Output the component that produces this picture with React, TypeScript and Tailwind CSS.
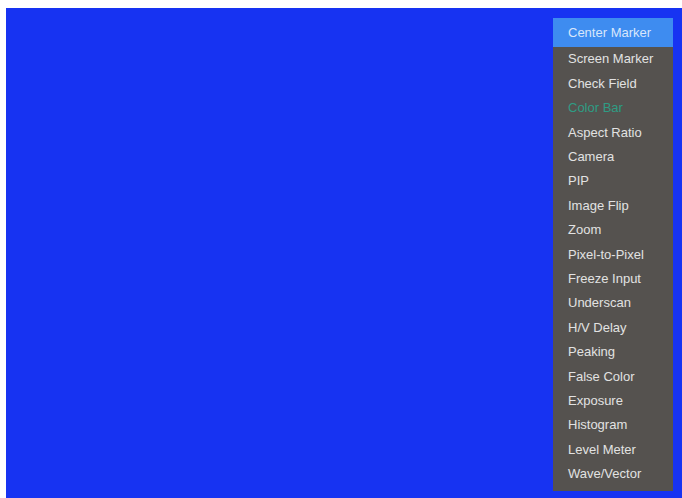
const items = [
  'Center Marker',
  'Screen Marker',
  'Check Field',
  'Color Bar',
  'Aspect Ratio',
  'Camera',
  'PIP',
  'Image Flip',
  'Zoom',
  'Pixel-to-Pixel',
  'Freeze Input',
  'Underscan',
  'H/V Delay',
  'Peaking',
  'False Color',
  'Exposure',
  'Histogram',
  'Level Meter',
  'Wave/Vector',
];

export default function App() {
  return (
    <div className="w-[682px] h-[498px] bg-white pt-[8px] pl-[6px] overflow-hidden">
      <div className="h-full w-full bg-[#1733f2] flex justify-end items-start pt-[10px] pr-[9px]">
        <ul
          className="w-[120px] bg-[#55524f] pb-[5px] text-[13px] text-[#e2e2e2]"
          style={{ fontFamily: '"Liberation Sans", Arial, sans-serif' }}
        >
          {items.map((label, i) => (
            <li
              key={label}
              className={
                i === 0
                  ? 'h-[29px] flex items-center pl-[15px] bg-[#3e8cf0] text-[#d8e6fb]'
                  : 'h-[24.4px] flex items-center pl-[15px] ' +
                    (label === 'Color Bar' ? 'text-[#2f9c84]' : '')
              }
            >
              {label}
            </li>
          ))}
        </ul>
      </div>
    </div>
  );
}
